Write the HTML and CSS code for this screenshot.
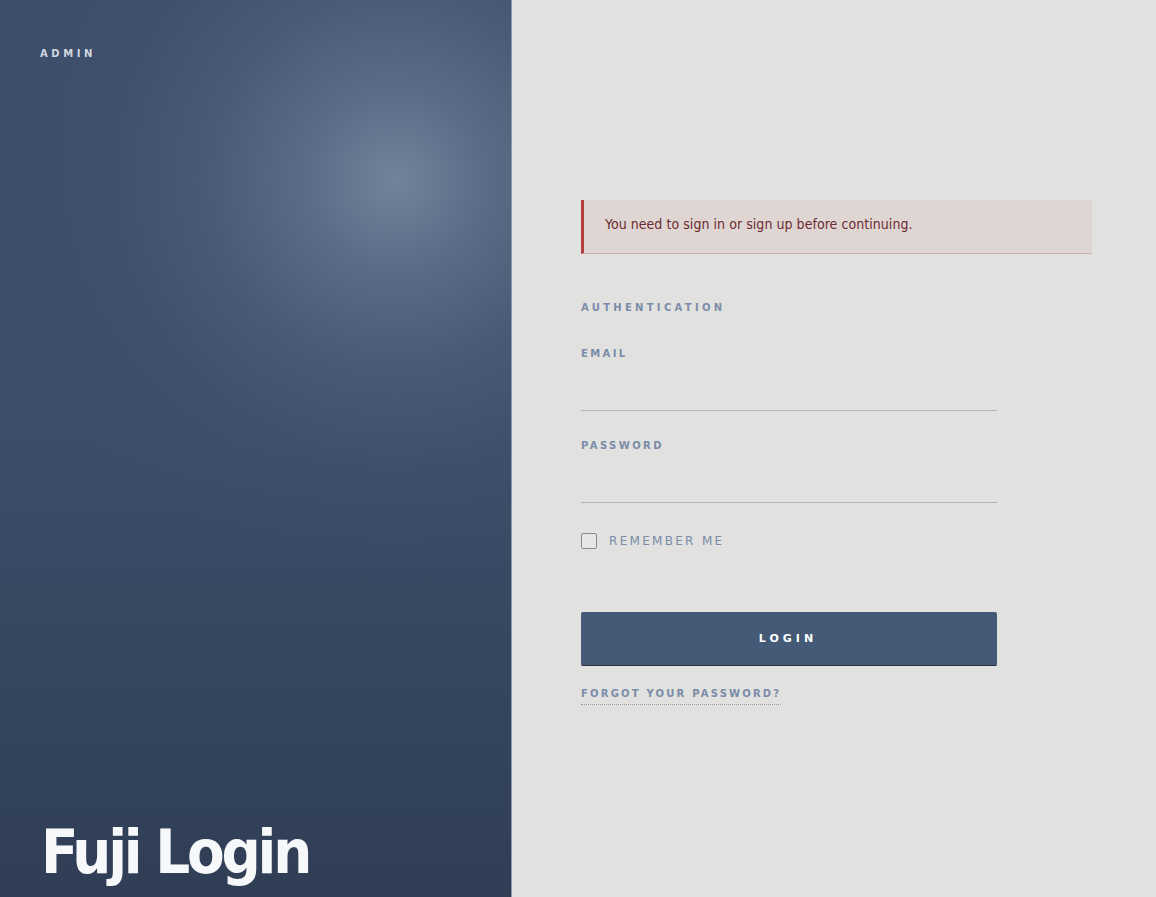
FILE: index.html
```html
<!DOCTYPE html>
<html>
<head>
<meta charset="utf-8">
<link rel="stylesheet" href="styles.css">
</head>
<body>
<div class="page">
  <aside class="hero">
    <div class="brand">ADMIN</div>
    <h1 class="title">Fuji Login</h1>
  </aside>
  <main class="panel">
    <div class="content">
      <div class="alert">You need to sign in or sign up before continuing.</div>
      <form class="form">
        <div class="section">AUTHENTICATION</div>
        <label class="field">
          <span class="label">EMAIL</span>
          <input class="input" type="email">
        </label>
        <label class="field">
          <span class="label">PASSWORD</span>
          <input class="input" type="password">
        </label>
        <label class="remember">
          <span class="box"></span>
          <span class="remember-text">REMEMBER ME</span>
        </label>
        <button class="btn" type="button">LOGIN</button>
        <a class="forgot" href="#">FORGOT YOUR PASSWORD?</a>
      </form>
    </div>
  </main>
</div>
</body>
</html>
```
FILE: styles.css
```css
* { box-sizing: border-box; }
html, body { margin: 0; height: 100%; }
body {
  font-family: "DejaVu Sans Condensed", "Liberation Sans", sans-serif;
  background: #e1e1e0;
}
.page {
  display: flex;
  height: 897px;
  overflow: hidden;
}
.hero {
  width: 512px;
  flex: none;
  display: flex;
  flex-direction: column;
  justify-content: space-between;
  padding: 48px 40px 0 40px;
  border-right: 1px solid #8b98ab;
  background:
    radial-gradient(circle at 395px 180px, rgba(125,140,165,0.85) 0px, rgba(110,126,152,0.62) 90px, rgba(92,110,138,0.38) 190px, rgba(75,94,124,0.15) 290px, rgba(60,80,110,0) 400px),
    linear-gradient(180deg, #3c4e69 0%, #3b4d68 50%, #2f3e55 100%);
}
.brand {
  color: #d3d8e0;
  font-family: "DejaVu Sans", sans-serif;
  font-weight: bold;
  font-size: 10px;
  letter-spacing: 3.6px;
}
.title {
  margin: 0 0 5px 1px;
  color: #f6f8fa;
  font-family: "DejaVu Sans Condensed", sans-serif;
  font-weight: bold;
  font-size: 61px;
  letter-spacing: -3.2px;
  line-height: 80px;
}
.panel {
  flex: 1;
  padding: 200px 64px 0 69px;
}
.alert {
  height: 54px;
  background: #dfd5d3;
  border-left: 3px solid #b3403f;
  border-bottom: 1px solid #cdb0ae;
  color: #6c2b30;
  padding: 16px 0 0 21px;
  font-family: "DejaVu Sans Condensed", sans-serif;
  font-size: 14px;
  letter-spacing: 0.05px;
}
.form {
  width: 416px;
  display: flex;
  flex-direction: column;
  padding-top: 48px;
}
.section, .label {
  color: #7a8ca8;
  font-family: "DejaVu Sans", sans-serif;
  font-weight: bold;
  font-size: 10px;
  letter-spacing: 3.3px;
}
.label { letter-spacing: 2.4px; }
.field {
  display: flex;
  flex-direction: column;
  margin-top: 35px;
}
.field + .field { margin-top: 29px; }
.input {
  margin-top: 0;
  height: 52px;
  border: 0;
  border-bottom: 1px solid #b5b5b5;
  background: transparent;
  outline: none;
}
.remember {
  display: flex;
  align-items: center;
  gap: 12px;
  margin-top: 30px;
}
.box {
  width: 16px;
  height: 16px;
  border: 1px solid #8a8a8a;
  border-radius: 2px;
  background: #e6e6e5;
}
.remember-text {
  color: #7a8ca8;
  font-family: "DejaVu Sans", sans-serif;
  font-size: 12px;
  letter-spacing: 2.3px;
}
.btn {
  margin-top: 63px;
  height: 54px;
  border: 0;
  border-bottom: 1px solid #262f3f;
  border-radius: 2px;
  background: #445a77;
  color: #ffffff;
  font-family: "DejaVu Sans", sans-serif;
  font-weight: bold;
  font-size: 11px;
  letter-spacing: 4px;
  padding-left: 4px;
}
.forgot {
  align-self: flex-start;
  margin-top: 22px;
  color: #7a8ca8;
  font-family: "DejaVu Sans", sans-serif;
  font-weight: bold;
  font-size: 10px;
  letter-spacing: 2.2px;
  text-decoration: none;
  border-bottom: 1px dotted #9a9a9a;
  padding-bottom: 5px;
}
```
